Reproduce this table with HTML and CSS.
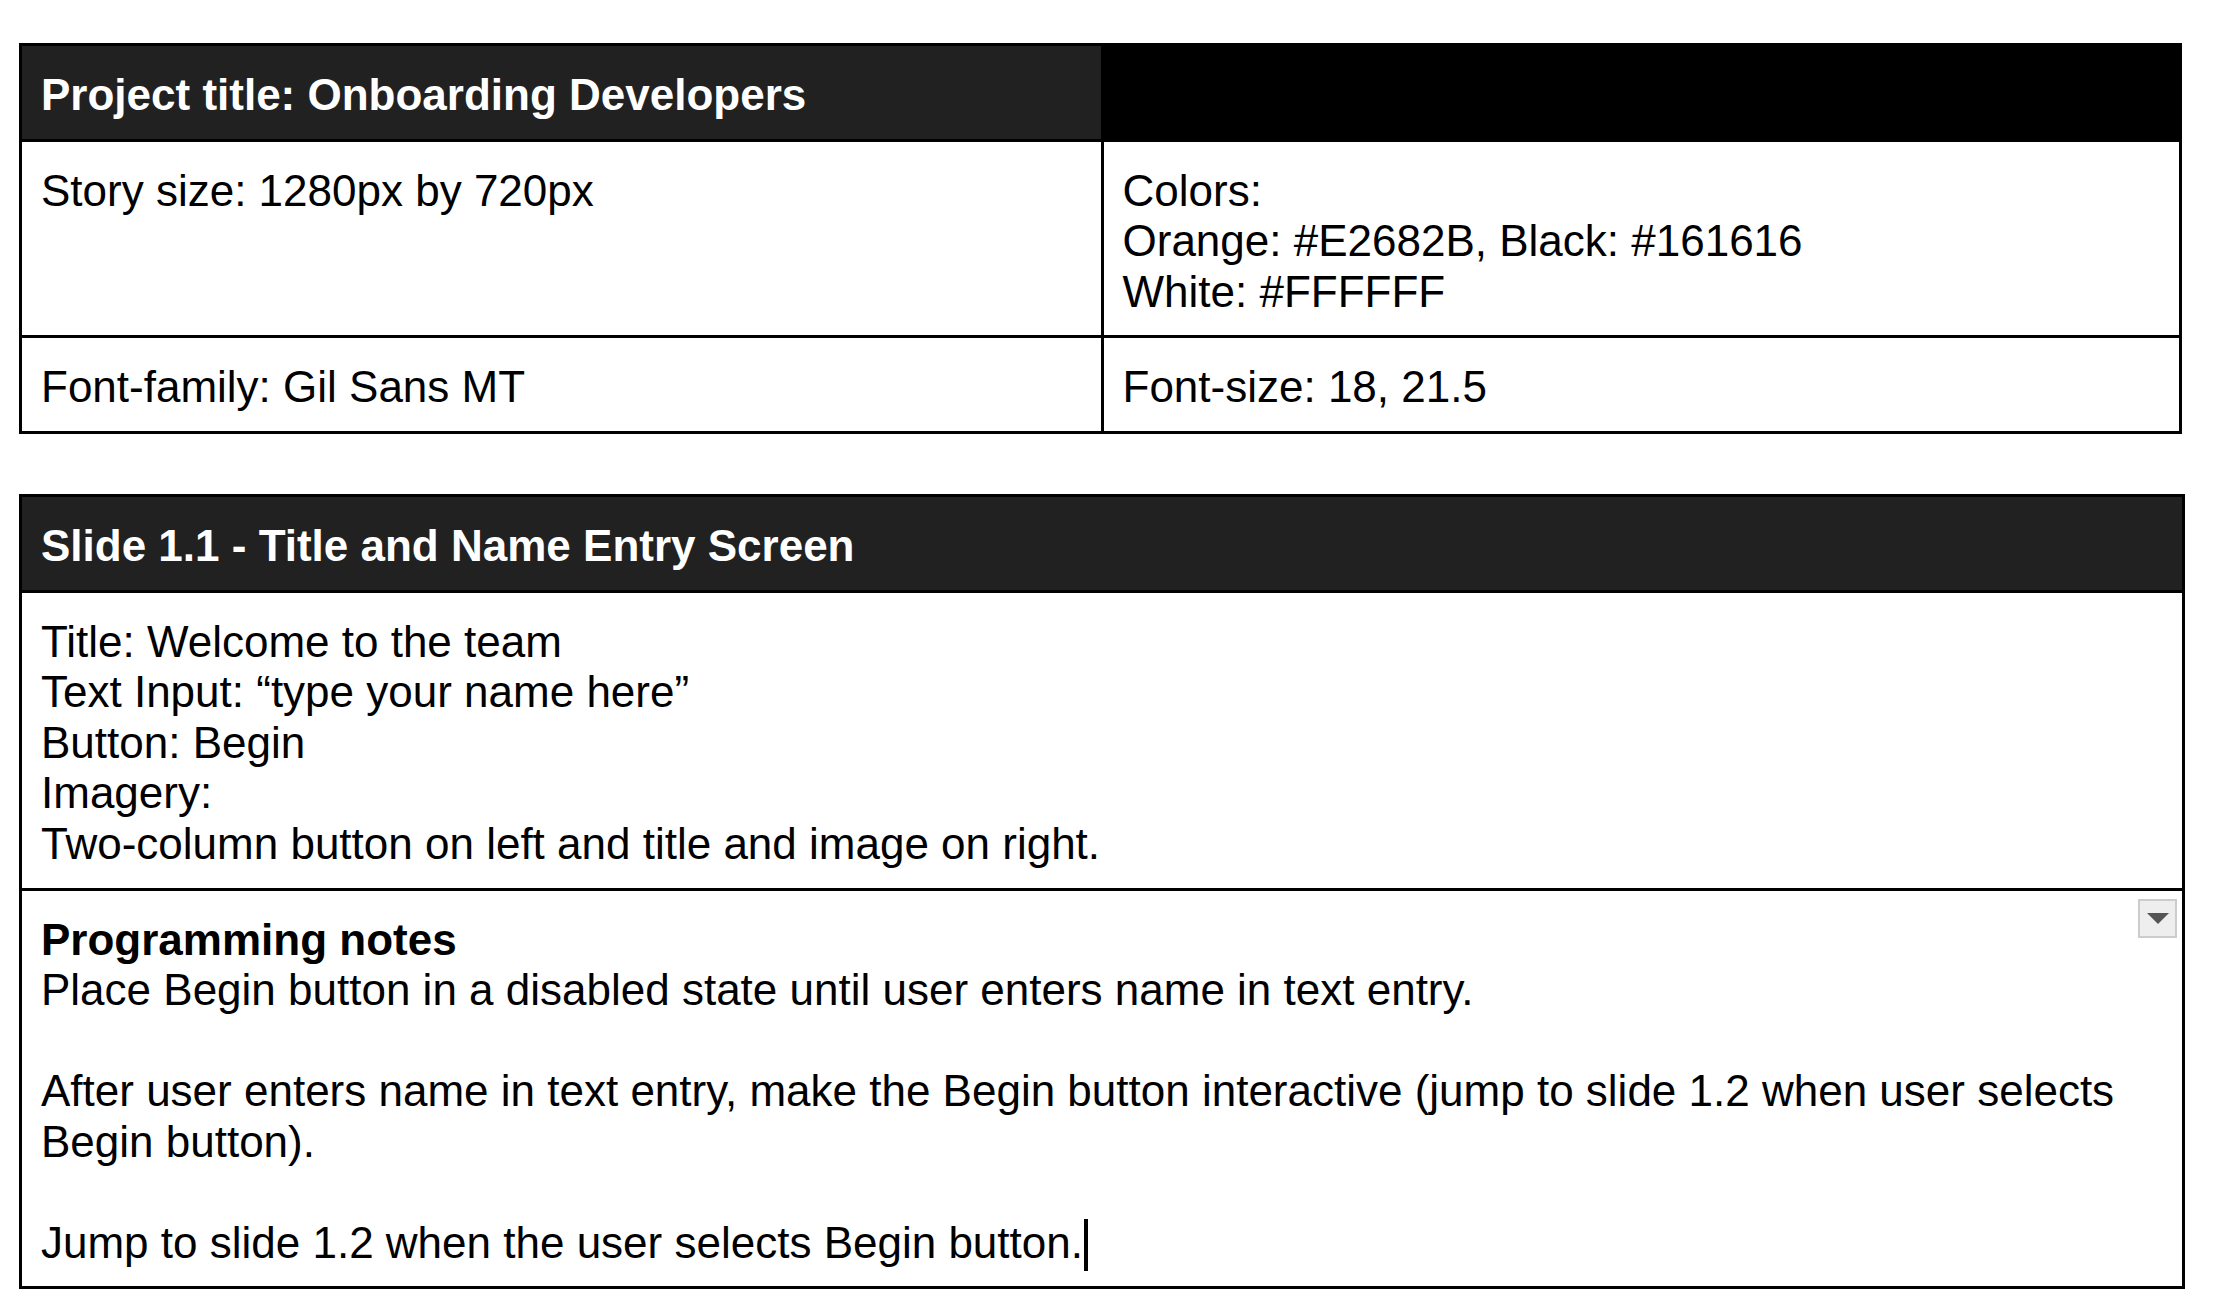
FILE: index.html
```html
<!DOCTYPE html>
<html lang="en">
<head>
<meta charset="utf-8">
<title>Onboarding Developers</title>
<link rel="stylesheet" href="styles.css">
</head>
<body>
<main class="page">
  <section class="doc-table table-project">
    <div class="row two">
      <div class="cell head head-gray"><strong>Project title: Onboarding Developers</strong></div>
      <div class="cell head head-black"></div>
    </div>
    <div class="row two">
      <div class="cell"><p>Story size: 1280px by 720px</p></div>
      <div class="cell"><p>Colors:</p><p>Orange: #E2682B, Black: #161616</p><p>White: #FFFFFF</p></div>
    </div>
    <div class="row two">
      <div class="cell"><p>Font-family: Gil Sans MT</p></div>
      <div class="cell"><p>Font-size: 18, 21.5</p></div>
    </div>
  </section>

  <section class="doc-table table-slide">
    <div class="row">
      <div class="cell head head-gray"><strong>Slide 1.1 - Title and Name Entry Screen</strong></div>
    </div>
    <div class="row">
      <div class="cell">
        <p>Title: Welcome to the team</p>
        <p>Text Input: “type your name here”</p>
        <p>Button: Begin</p>
        <p>Imagery:</p>
        <p>Two-column button on left and title and image on right.</p>
      </div>
    </div>
    <div class="row">
      <div class="cell notes">
        <p><strong>Programming notes</strong></p>
        <p>Place Begin button in a disabled state until user enters name in text entry.</p>
        <p class="blank">&nbsp;</p>
        <p>After user enters name in text entry, make the Begin button interactive (jump to slide 1.2 when user selects Begin button).</p>
        <p class="blank">&nbsp;</p>
        <p>Jump to slide 1.2 when the user selects Begin button.<span class="caret"></span></p>
        <div class="dropdown" aria-hidden="true">
          <svg width="22" height="11" viewBox="0 0 22 11"><path d="M0 0 H22 L11 11 Z" fill="#555"/></svg>
        </div>
      </div>
    </div>
  </section>
</main>
</body>
</html>
```
FILE: styles.css
```css
html, body {
  margin: 0;
  padding: 0;
  background: #ffffff;
}

body {
  font-family: "Liberation Sans", Arial, sans-serif;
  font-size: 44px;
  line-height: 1.15;
  color: #000000;
}

.page {
  padding: 43px 0 0 19px;
}

.doc-table {
  box-sizing: border-box;
  border: 3px solid #000000;
}

.table-project {
  width: 2163px;
}

.table-slide {
  width: 2166px;
  margin-top: 60px;
}

.row {
  display: grid;
  grid-template-columns: 1fr;
}

.row.two {
  grid-template-columns: 1fr 1fr;
}

.row + .row {
  border-top: 3px solid #000000;
}

.cell {
  padding: 24px 17px 18px 19px;
  min-height: 50.6px;
}

.cell + .cell {
  border-left: 3px solid #000000;
}

.cell p {
  margin: 0;
}

.head {
  color: #ffffff;
  font-weight: bold;
}

.head-gray {
  background: #212121;
}

.head-black {
  background: #000000;
}

.notes {
  position: relative;
  padding-bottom: 15px;
}

.caret {
  display: inline-block;
  width: 4px;
  height: 52px;
  background: #000000;
  vertical-align: -13px;
  margin-left: 1px;
}

.dropdown {
  position: absolute;
  top: 8px;
  right: 5px;
  width: 39px;
  height: 39px;
  box-sizing: border-box;
  background: #eeeeee;
  border: 2px solid #cccccc;
  display: flex;
  align-items: center;
  justify-content: center;
}

.dropdown svg {
  display: block;
}
```
